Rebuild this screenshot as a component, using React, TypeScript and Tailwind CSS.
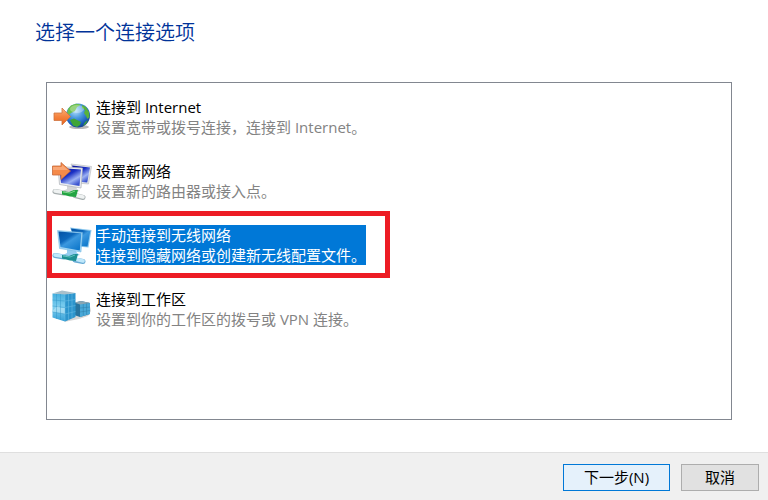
import { useState } from "react";
import type { ReactNode } from "react";

const GlobeIcon = () => (
  <svg viewBox="0 0 40 40" className="size-10 shrink-0" aria-hidden="true">
    <defs>
      <radialGradient id="ocean" cx="0.4" cy="0.3" r="0.75">
        <stop offset="0" stopColor="#b9e2fb" />
        <stop offset="0.4" stopColor="#4d9be0" />
        <stop offset="0.8" stopColor="#1758b8" />
        <stop offset="1" stopColor="#143c86" />
      </radialGradient>
      <linearGradient id="arrow" x1="0" y1="0" x2="0" y2="1">
        <stop offset="0" stopColor="#fbb27c" />
        <stop offset="0.5" stopColor="#f5843f" />
        <stop offset="1" stopColor="#e8641c" />
      </linearGradient>
    </defs>
    <ellipse cx="27" cy="30" rx="10" ry="2" fill="#b8b8b8" />
    <circle cx="26" cy="18.500" r="12" fill="url(#ocean)" />
    <path d="M16 12 L19 8.500 L24 6.800 L29 7.500 L27 9 L25 10 L23 14 L19 16 L17 18 L15 17 Z" fill="#6cc04a" />
    <path d="M30 8 L34 10 L37 15 L37.500 20 L35.500 22 L34 19 L32 16 L33 13 L30 11 Z" fill="#58b23c" />
    <path d="M18 23 L22 21.500 L29 25 L28 28 L25 30 L21 28.500 Z" fill="#3fa535" />
    <path d="M33 25 L36 23 L34 27 L31 29 Z" fill="#3d9c3a" />
    <ellipse cx="25" cy="12" rx="7" ry="4" fill="#fff" opacity="0.3" />
    <path
      d="M2 16 H10 V11 L18.500 19.500 L10 28 V23.500 H2 Z"
      fill="url(#arrow)"
      stroke="#cf7440"
      strokeWidth="0.8"
    />
  </svg>
);

const NewNetworkIcon = () => (
  <svg viewBox="0 0 40 40" className="size-10 shrink-0" aria-hidden="true">
    <defs>
      <linearGradient id="navy" x1="0" y1="0" x2="0.7" y2="1">
        <stop offset="0" stopColor="#0a1296" />
        <stop offset="0.45" stopColor="#1a2fc4" />
        <stop offset="0.75" stopColor="#9db2f3" />
        <stop offset="1" stopColor="#3a52cf" />
      </linearGradient>
    </defs>
    <path d="M19 3 L39.500 5.500 L36.500 23 L25 22 Z" fill="#e3e5e8" stroke="#b5b8bd" strokeWidth="0.6" />
    <path d="M20 4.500 L38 6.500 L35.200 21.500 L25 20.500 Z" fill="url(#navy)" />
    <path d="M15 24 L24 25 L25 28 L28 30 L20 32 L11 30 L15 28 Z" fill="#d3d5d8" />
    <path d="M6 5.500 L30.500 7 L29 27 L7.500 23.500 Z" fill="#eceef1" stroke="#aeb2b8" strokeWidth="0.7" />
    <path d="M7.500 7 L29 8.500 L27.500 25 L9 22 Z" fill="url(#navy)" />
    <path d="M3 30.500 L12 32 M23 34.500 L31 36.500" stroke="#a5adae" strokeWidth="5" strokeLinecap="round" />
    <path d="M3 30 L12 31.500 M23 34 L31 36" stroke="#eff2f2" strokeWidth="3.5" strokeLinecap="round" />
    <path d="M10 30 L17 31 L22 29 L26 29 L24 36 L18 35.500 L10 33.500 Z" fill="#23a443" />
    <path d="M11 31 L18 32 L23 30" stroke="#82d58e" strokeWidth="1" fill="none" />
    <path
      d="M0.500 5 H9 V1.500 L18.500 10 L9 18.500 V14 H0.500 Z"
      fill="#f58a49"
      stroke="#c66b3c"
      strokeWidth="0.8"
    />
    <path d="M1 6 H10 V4 L16 9 H1 Z" fill="#fbb48a" opacity="0.7" />
  </svg>
);

const WirelessIcon = () => (
  <svg viewBox="0 0 40 40" className="size-10 shrink-0" aria-hidden="true">
    <defs>
      <linearGradient id="azure" x1="0" y1="0" x2="0.8" y2="1">
        <stop offset="0" stopColor="#0452a4" />
        <stop offset="0.4" stopColor="#0d68bc" />
        <stop offset="0.55" stopColor="#3b98df" />
        <stop offset="1" stopColor="#0f78cb" />
      </linearGradient>
    </defs>
    <path d="M18 2.500 L39.500 5 L36.500 22.500 L25 21.500 Z" fill="#8cc8ee" />
    <path d="M19 3.500 L38.300 6 L35.500 21.500 L24 20.500 Z" fill="url(#azure)" />
    <path d="M15 24 L24 26 L25 28 L28 30 L20 32 L11 30 L15 28 Z" fill="#94ccef" />
    <path d="M5.500 5.500 L30.500 7.500 L29 27 L7.500 23.500 Z" fill="#9fd4f4" stroke="#6fb4df" strokeWidth="0.5" />
    <path d="M6.500 6.500 L29.300 8.300 L27.800 25.500 L8.500 22 Z" fill="url(#azure)" />
    <path d="M3 30.500 L12 32 M23 35 L31 36.500" stroke="#68abd5" strokeWidth="5" strokeLinecap="round" />
    <path d="M3 30 L12 31.500 M23 34 L31 36" stroke="#bfe8fb" strokeWidth="3.5" strokeLinecap="round" />
    <path d="M10 30 L17 31 L22 29 L26 29 L24 36 L18 35.500 L10 33.500 Z" fill="#1d8f93" />
    <path d="M11 31 L18 32 L23 30" stroke="#5fc2bd" strokeWidth="1" fill="none" />
  </svg>
);

const WorkplaceIcon = () => (
  <svg viewBox="0 0 40 40" className="size-10 shrink-0" aria-hidden="true">
    <defs>
      <linearGradient id="glass" x1="0" y1="0" x2="0" y2="1">
        <stop offset="0" stopColor="#45afde" />
        <stop offset="0.5" stopColor="#7fcff0" />
        <stop offset="1" stopColor="#349fd6" />
      </linearGradient>
    </defs>
    <path d="M12 33 L27 30 L36 27 L39 22 L37 13 Z" fill="#c5c5c5" opacity="0.7" />
    <path d="M22 14 L29 12 L38 14 L38 25 L28 28 L22 26 Z" fill="#27749f" />
    <path d="M28 15 L38 14 L38 25 L28 28 Z" fill="#4aa9d8" />
    <path d="M22 13.500 L29 12 L38 14 L28 15.500 Z" fill="#8ba6b3" />
    <path
      d="M31.300 15 V26.500 M34.600 14.500 V26 M28 19 L38 18 M28 23 L38 21.500"
      stroke="#2f7ca6"
      strokeWidth="0.5"
      fill="none"
    />
    <path d="M0.500 4.500 L13 5 L13 32.500 L0.500 28.500 Z" fill="url(#glass)" />
    <path d="M13 5 L23.500 4 L23.500 28 L13 32.500 Z" fill="#2c95cd" />
    <path d="M0.500 4.500 L10 1.500 L23.500 4 L13 5.500 Z" fill="#a9c0cb" />
    <path d="M1 21 L6 16.500 L9 19 L13 19 V25 L1 23 Z" fill="#b7e4f5" opacity="0.7" />
    <path
      d="M4.500 5 V30 M8.500 5 V31 M0.500 11 L13 12 M0.500 17 L13 18.500 M0.500 23 L13 25"
      stroke="#2a8fc2"
      strokeWidth="0.4"
      fill="none"
    />
    <path
      d="M13 5 V32 M16.500 5 V31 M20 5 V29 M13 12 L23.500 10.500 M13 18.500 L23.500 16.500 M13 25 L23.500 22.500"
      stroke="#6cbfe4"
      strokeWidth="0.5"
      fill="none"
    />
  </svg>
);

type Option = {
  id: string;
  title: string;
  desc: string;
  icon: ReactNode;
};

const options: Option[] = [
  {
    id: "internet",
    title: "连接到 Internet",
    desc: "设置宽带或拨号连接，连接到 Internet。",
    icon: <GlobeIcon />,
  },
  {
    id: "router",
    title: "设置新网络",
    desc: "设置新的路由器或接入点。",
    icon: <NewNetworkIcon />,
  },
  {
    id: "wireless",
    title: "手动连接到无线网络",
    desc: "连接到隐藏网络或创建新无线配置文件。",
    icon: <WirelessIcon />,
  },
  {
    id: "workplace",
    title: "连接到工作区",
    desc: "设置到你的工作区的拨号或 VPN 连接。",
    icon: <WorkplaceIcon />,
  },
];

export default function App() {
  const [selected, setSelected] = useState("wireless");

  return (
    <div
      lang="zh-CN"
      className="flex min-h-screen flex-col bg-white font-['Open_Sans','Noto_Sans_CJK_SC',sans-serif] text-[15px] leading-5 text-black"
    >
      <main className="flex flex-1 flex-col pt-4 pr-9 pb-8 pl-[35px]">
        <h1 className="text-xl leading-[34px] font-[350] text-[#003399]">选择一个连接选项</h1>

        <ul className="mt-8 ml-[11px] flex-1 border border-[#828790] pt-0.5">
          {options.map((opt) => {
            const active = opt.id === selected;
            return (
              <li key={opt.id} className="relative">
                <button
                  type="button"
                  aria-pressed={active}
                  onClick={() => setSelected(opt.id)}
                  className="flex w-full items-center gap-1 px-[5px] py-3 text-left outline-none"
                >
                  {opt.icon}
                  <span className={active ? "bg-[#0078d7] text-white" : ""}>
                    <span className="block">{opt.title}</span>
                    <span className={active ? "block" : "block text-[#838383]"}>{opt.desc}</span>
                  </span>
                </button>
                {/* red marker around the wireless entry */}
                {opt.id === "wireless" && (
                  <div className="pointer-events-none absolute -top-0.5 -bottom-px left-0 w-[343px] border-5 border-[#ed1c24]" />
                )}
              </li>
            );
          })}
        </ul>
      </main>

      <footer className="flex justify-end gap-[11px] border-t border-[#dfdfdf] bg-[#f0f0f0] pt-[11px] pr-[9px] pb-[9px]">
        <button type="button" className="h-[27px] w-[107px] border border-[#0078d7] bg-[#e5f1fb] pb-0.5">
          下一步(N)
        </button>
        <button type="button" className="h-[27px] w-[78px] border border-[#adadad] bg-[#e1e1e1] pb-0.5">
          取消
        </button>
      </footer>
    </div>
  );
}
